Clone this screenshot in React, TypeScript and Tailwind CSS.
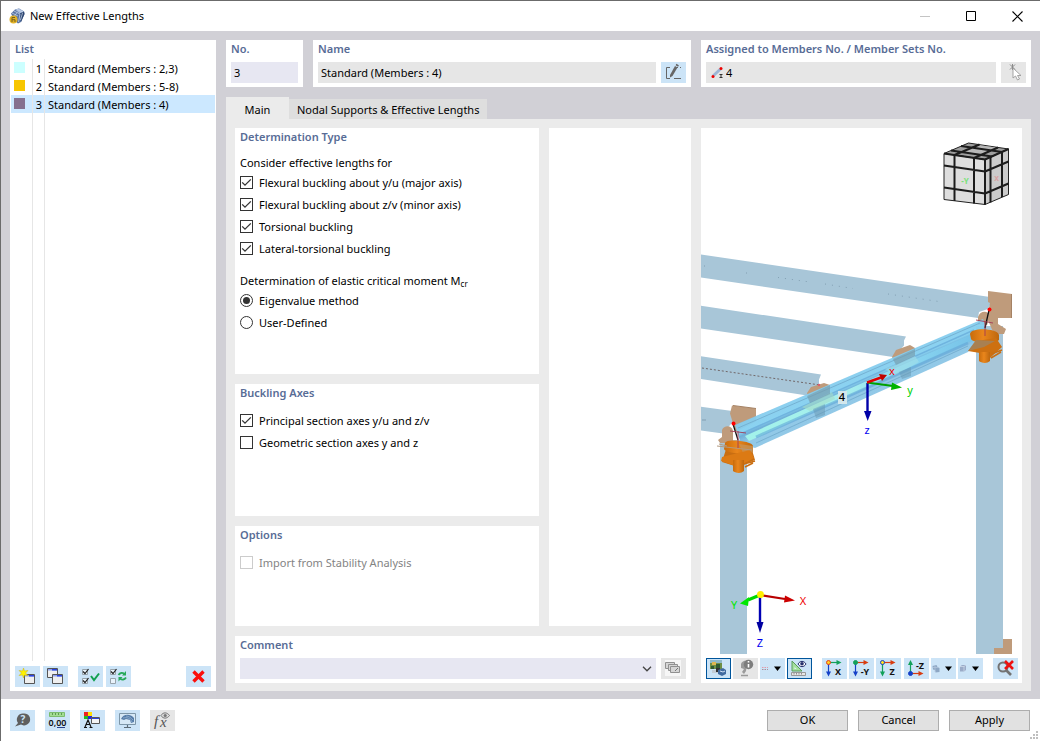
import { useState } from 'react';
import type { ReactNode } from 'react';
import { clsx } from 'clsx';

interface ListEntry {
  no: number;
  label: string;
  swatch: string;
}

const entries: ListEntry[] = [
  { no: 1, label: 'Standard (Members : 2,3)', swatch: 'bg-[#ccffff]' },
  { no: 2, label: 'Standard (Members : 5-8)', swatch: 'bg-[#f7c600]' },
  { no: 3, label: 'Standard (Members : 4)', swatch: 'bg-[#85708f]' },
];

interface IconButtonProps {
  label: string;
  children: ReactNode;
  active?: boolean;
  disabled?: boolean;
}

function IconButton({ label, children, active, disabled }: IconButtonProps) {
  return (
    <button
      type="button"
      aria-label={label}
      title={label}
      disabled={disabled}
      className={clsx(
        'flex h-[21px] w-[25px] shrink-0 items-center justify-center',
        disabled ? 'bg-[#e6e6e6]' : 'bg-[#cce4f7]',
        active && 'border border-[#00559b]',
      )}
    >
      <svg width="23" height="19" viewBox="0 0 23 19" aria-hidden="true">
        {children}
      </svg>
    </button>
  );
}

function Title({ children, htmlFor }: { children: ReactNode; htmlFor?: string }) {
  const cls = 'block h-[18px] px-[5px] text-[11px] leading-[18px] font-semibold text-[#586c96]';
  if (htmlFor) {
    return <label htmlFor={htmlFor} className={cls}>{children}</label>;
  }
  return <h2 className={cls}>{children}</h2>;
}

interface CheckProps {
  label: string;
  defaultChecked?: boolean;
  disabled?: boolean;
}

function Check({ label, defaultChecked, disabled }: CheckProps) {
  return (
    <label className={clsx('flex h-[22px] items-center gap-1.5', disabled && 'text-[#838383]')}>
      <span className="relative mb-px flex h-[13px] w-[13px]">
        <input
          type="checkbox"
          defaultChecked={defaultChecked}
          disabled={disabled}
          className="peer h-[13px] w-[13px] appearance-none border border-[#333] bg-white disabled:border-[#ccc]"
        />
        <svg
          viewBox="0 0 13 13"
          aria-hidden="true"
          className="pointer-events-none absolute inset-0 hidden h-[13px] w-[13px] peer-checked:block"
        >
          <path d="M2.2 6.4 5 9.2 10.8 3.4" fill="none" stroke="#333" strokeWidth="1.3" />
        </svg>
      </span>
      {label}
    </label>
  );
}

function Radio({ label, defaultChecked }: { label: string; defaultChecked?: boolean }) {
  return (
    <label className="flex h-[22px] items-center gap-1.5">
      <span className="relative mb-px flex h-[13px] w-[13px] items-center justify-center">
        <input
          type="radio"
          name="mcr-method"
          defaultChecked={defaultChecked}
          className="peer h-[13px] w-[13px] appearance-none rounded-full border border-[#333] bg-white"
        />
        <span className="pointer-events-none absolute hidden h-[7px] w-[7px] rounded-full bg-[#333] peer-checked:block" />
      </span>
      {label}
    </label>
  );
}

function AppIcon() {
  return (
    <svg width="16" height="16" viewBox="0 0 16 16" aria-hidden="true">
      <path d="M2 5.500 6 1.500 10 .5 15 3.500 15.500 6 12 14 9 15.500 5 12z" fill="#5873a3" />
      <path d="M6 1.500 10 .5 15 3.500 11 5.500z" fill="#a9bcdc" />
      <path d="M11 5.500 15 3.500 15.500 6 12 14z" fill="#2e4670" />
      <path d="M3 5l6 3M5 3l6 3M8 1.500l6 2.500M11 6 9.500 14M8 4.500 5.500 8M13.500 5 11.500 12" stroke="#cfdbee" strokeWidth=".7" />
      <circle cx="4.500" cy="11.500" r="4" fill="#e2b226" />
      <path d="M3 14V9.500h3M3 11.700h3v2.300" stroke="#75601e" strokeWidth="1" fill="none" />
    </svg>
  );
}

function WindowShape({ x, y }: { x: number; y: number }) {
  return (
    <g transform={`translate(${x} ${y})`}>
      <path d="M.5.5h10v9H.5z" fill="#efefef" stroke="#555" />
      <path d="M1 1h9v1.500H1z" fill="#8fa2ee" />
      <path d="M5 1h5v1.500H5z" fill="#2942e0" />
    </g>
  );
}

function TickedBoxes({ second }: { second: boolean }) {
  return (
    <>
      <path d="M3.500 2.500h5v5h-5zM3.500 11.500h5v5h-5z" fill="#e9f3fb" stroke="#98a3ab" />
      <path d="M4 4.500 6 6.500 9.500 2" fill="none" stroke="#222" strokeWidth="1.200" />
      {second && <path d="M4 13.500 6 15.500 9.500 11" fill="none" stroke="#222" strokeWidth="1.200" />}
    </>
  );
}

interface AxisIconProps {
  text: string;
  dot: string;
  ring: string;
  side: string;
  vert: string;
  up?: boolean;
}

function AxisIcon({ text, dot, ring, side, vert, up }: AxisIconProps) {
  const y = up ? 14.5 : 3.500;
  return (
    <>
      <path d={`M5.500 ${y}H14`} stroke={side} strokeWidth="1.200" />
      <path d={`M13.500 ${y - 2.5}L18.500 ${y}L13.500 ${y + 2.5}z`} fill={side} />
      <path d="M5.500 3.500V15" stroke={vert} strokeWidth="1.200" />
      <path d={up ? 'M3 6 5.500 1 8 6z' : 'M3 12.500 5.500 17.500 8 12.500z'} fill={vert} />
      <circle cx="5.500" cy={y} r="2" fill={dot} stroke={ring} />
      <text
        x="15"
        y={up ? 10 : 16}
        textAnchor="middle"
        fontSize="9"
        fontWeight="700"
        fill="#111"
      >
        {text}
      </text>
    </>
  );
}

function NavCube() {
  return (
    <g strokeLinejoin="round">
      <path d="M944 153.500 968.500 143l40 6L985 159.500z" fill="#9f9f9f" stroke="#222" />
      <path d="M944 153.500 985 159.500v45L944 199.500z" fill="#dedede" stroke="#222" />
      <path d="M985 159.500 1008.500 149v45.500L985 204.500z" fill="#cbcbcb" stroke="#222" />
      <path d="M960 151.500 978 145l18 2.500-15 6.500z" fill="#b8b8b8" />
      <path
        d="M954.500 155v46M974 158v45.500M944 165.500 985 171.500M944 187.500 985 193.500M985 171.500l23.500-10M985 193.500l23.500-10M990.500 157v45.500M1002 152v45M954.500 155l25-10.500M974 158l24-10.500M951 150.500l41 6M961 146l41 6"
        fill="none"
        stroke="#1c1c1c"
        strokeWidth="2"
      />
      <path d="M944 153.500 985 159.500V204.500M985 159.500 1008.500 149" fill="none" stroke="#1c1c1c" strokeWidth="2" />
      <text x="965" y="184" textAnchor="middle" fontSize="8" fontWeight="700" fill="#7be27b">-Y</text>
      <text x="996.500" y="181" textAnchor="middle" fontSize="7" fontWeight="700" fill="#d9a0a0">X</text>
    </g>
  );
}

function ModelView() {
  return (
    <svg
      viewBox="701 128 321 526"
      preserveAspectRatio="xMidYMid slice"
      role="img"
      aria-label="Model view"
      className="min-h-0 w-full flex-1"
    >
      <defs>
        <linearGradient id="flange" x1="845" y1="364" x2="858" y2="394" gradientUnits="userSpaceOnUse">
          <stop offset="0" stopColor="#8fc3e0" />
          <stop offset=".2" stopColor="#84b8d8" />
          <stop offset=".27" stopColor="#69a8d2" />
          <stop offset=".4" stopColor="#86cdee" />
          <stop offset=".65" stopColor="#84d0f0" />
          <stop offset=".76" stopColor="#68abd6" />
          <stop offset="1" stopColor="#8cc6e6" />
        </linearGradient>
        <linearGradient id="web" x1="740" y1="0" x2="985" y2="0" gradientUnits="userSpaceOnUse">
          <stop offset="0" stopColor="#a2f3ea" />
          <stop offset=".45" stopColor="#a6eeed" />
          <stop offset=".6" stopColor="#8fdcf4" />
          <stop offset="1" stopColor="#74bfe6" />
        </linearGradient>
        <linearGradient id="support" x1="0" y1="0" x2="1" y2="0">
          <stop offset="0" stopColor="#c86c0c" />
          <stop offset=".45" stopColor="#ea861c" />
          <stop offset="1" stopColor="#bd670e" />
        </linearGradient>
      </defs>

      {/* purlins and columns */}
      <g fill="#a8c6d8">
        <path d="M701 254.500 990 297v8l-2 4-9 3-1 6L701 277.500z" />
        <path d="M701 305.700 906 336.500l-2 4v5l-11 11.500L701 328.500z" />
        <path d="M701 356.300 821 374.500l-2 5v6l-12 10L701 379z" />
        <path d="M701 406.700 736 411.500l-3 10-10 12L701 430.500z" />
        <path d="M720 440h27v214h-27zM976 326h27v328h-27z" />
      </g>
      <path d="M702 368 820 385" stroke="#6a5c5c" strokeWidth=".9" strokeDasharray="2 2" />
      <path d="M778 277.500 810 282M825 284l28 4.500M888 294l54 8" stroke="#7895a8" strokeWidth=".8" strokeDasharray="1 6" />
      <path d="M704 266h1M746 273h1M702 420h4" stroke="#7895a8" strokeWidth=".8" />

      {/* end plates */}
      <g fill="#bf9b7b">
        <path d="M732 405.500 756 408.500v13l-20 10-3-8-3-10z" />
        <path d="M722 430c2-5 10-5 11 1v12h-13l-2-3 4-3z" />
        <path d="M988 291 1012 294v24h-14v6l8 5-2 5h-10l-7-16 3-15-2-1z" />
        <path d="M978 317c2-7 11-7 12 0l-3 8h-9z" />
        <path d="M807 393l4-6 13-4 6 2v7l-20 10z" />
        <path d="M892 357l4-7 14-5 5 3v6l-20 10z" />
        <path d="M994 648 1003 648v-9h9v15h-18z" />
      </g>
      <path d="M1011.500 294v24M733 405.500l23 3" stroke="#a58264" fill="none" />

      {/* member 4 */}
      <path d="M735 425 983 319l4 12-19 21-213 96-14-4z" fill="url(#flange)" opacity=".95" />
      <path d="M745 436 900 366 975 333l3 5L898 373 749 441z" fill="url(#web)" />
      <path d="M743 433 974 330" stroke="#70b4df" strokeWidth="1.500" />
      <path d="M738 428 980 323M756 443 968 346" stroke="#70a9cc" strokeWidth=".8" />
      <path d="M756 437 968 343" stroke="#62a8d9" strokeWidth="3" opacity=".6" />
      <path d="M802 407 832 392l3 7-25 12z" fill="#a5dcc8" opacity=".6" />
      <path d="M885 369 915 356l4 6-24 13z" fill="#a3dfe8" opacity=".6" />
      <path d="M807 396 830 385v9l-20 9z" fill="#7699a8" opacity=".6" />
      <path d="M893 359 915 349v7l-19 9z" fill="#7699a8" opacity=".6" />
      <path d="M813 409 825 404v11l-9 3zM899 372 911 367v9l-9 3z" fill="#6797b2" opacity=".5" />

      {/* supports */}
      <g>
        <path d="M722 462 727 446 752 450 755 460 738 467z" fill="#c96e12" />
        <path d="M725 443c1-5 28-2 28 3v6c-4 4-28 1-29-3z" fill="url(#support)" />
        <path d="M739 444 753 446v6l-9 3z" fill="#c99355" opacity=".8" />
        <path d="M722 457 750 450 754 458 738 467 721 461z" fill="#dc7a14" />
        <path d="M733 460h11v11c-3 3-9 2-11 0z" fill="url(#support)" />
        <path d="M744 464 755 461M745 467l8-4" stroke="#c96e12" strokeWidth="1.500" />
        <path d="M717 446l35 4M719 444l8 2" stroke="#b39a80" />
        <path d="M970 334c0-7 28-6 29 1v5c-6 5-27 3-28-1z" fill="url(#support)" />
        <path d="M968 351 977 341 996 338 1002 347 990 358 980 353z" fill="#cd7011" />
        <path d="M968 351 976 340 995 341 984 347z" fill="#a88052" />
        <path d="M979 352h11v9c-3 3-9 2-11 0z" fill="url(#support)" />
        <path d="M991 354 1002 350M991 358l10-6" stroke="#c96e12" strokeWidth="1.500" />
      </g>
      <path d="M733 424 738 440M989 310 985 328" stroke="#111" strokeWidth="1.300" />
      <path d="M730 431 746 433M738 431v17M976 320l17 3M985 322v14" stroke="#a33b55" strokeWidth=".9" />
      <circle cx="733.500" cy="423.500" r="2" fill="#f00" />
      <circle cx="989.500" cy="309.500" r="2" fill="#f00" />
      <circle cx="819" cy="385" r="1.200" fill="#dd5f6e" />

      <rect x="838" y="391" width="9" height="13" fill="#d2e7ec" />
      <text x="842" y="401" textAnchor="middle" fontSize="11" fontWeight="500" fill="#000">4</text>

      {/* member axes */}
      <path d="M867.500 383V411" stroke="#0000a8" strokeWidth="2.400" />
      <path d="M864 411h7.500L867.700 421z" fill="#0000a8" />
      <path d="M867 382.500 893 386" stroke="#00a000" strokeWidth="2" />
      <path d="M892 382.500 902 387.500 891 390z" fill="#00b400" />
      <path d="M867 382.500 881 377.500" stroke="#e00000" strokeWidth="2.400" />
      <path d="M879 374 887 375 882 381z" fill="#c00000" />
      <g fontSize="11" textAnchor="middle">
        <text x="892" y="375" fill="#f00000">x</text>
        <text x="910" y="394" fill="#00d000">y</text>
        <text x="867" y="434" fill="#0000f0">z</text>
      </g>

      {/* global axes */}
      <path d="M760 595V623" stroke="#0000b4" strokeWidth="2.400" />
      <path d="M756.500 622h7L760 633z" fill="#0000a0" />
      <path d="M760 595 785 599" stroke="#b80000" strokeWidth="2.200" />
      <path d="M785 595.500 795 600.500 784 602.500z" fill="#cc0000" />
      <path d="M760 595 748 600" stroke="#00d800" strokeWidth="3" />
      <path d="M749 597 740 603.500 748 606z" fill="#00e800" />
      <circle cx="760.500" cy="594.500" r="3.500" fill="#ffee00" />
      <g fontSize="11" textAnchor="middle">
        <text x="803" y="605" fill="#f00000">X</text>
        <text x="734" y="609" fill="#00e800">Y</text>
        <text x="760" y="647" fill="#0000f0">Z</text>
      </g>

      <NavCube />
    </svg>
  );
}

function ViewToolbar() {
  return (
    <div role="toolbar" aria-label="View" className="flex px-1 py-1 pl-[5px]">
      <div className="flex gap-[2px]">
        <IconButton label="Rendering" active>
          <path d="M3 1h12v9H3z" fill="#6f8f45" />
          <path d="M3 1h12v3H3z" fill="#8fb9c9" />
          <path d="M5 3h4v3H5z" fill="#dfb850" />
          <path d="M9 5h4v4H9zM4 7h3v3H4z" fill="#2f5b31" />
          <path d="M5 11h6v3H5z" fill="#c3cdd6" />
          <path d="M9 9h4v4H9z" fill="#333" />
          <path d="M11 11l5-2 3 2v4l-4 2-4-2z" fill="#416ba0" />
          <path d="M13 12l3 1 2-1" stroke="#d2e2f5" fill="none" />
        </IconButton>
        <IconButton label="Information" disabled>
          <path d="M7 5c1-4 8-5 9-1l-3 1-1 7-2 3-2-2 2-3-3-1z" fill="#9a9a9a" />
          <circle cx="14.500" cy="5.500" r="4.700" fill="#7d7d7d" />
          <path d="M14.500 5v3.500M14.500 2v1.500" stroke="#fff" strokeWidth="1.600" />
          <path d="M7 16.500h7" stroke="#999" strokeWidth="1.500" />
        </IconButton>
        <IconButton label="Line style">
          <path d="M1 8.500h6" stroke="#e29aa8" strokeDasharray="1.500 1" />
          <path d="M1 10.500h6" stroke="#a88f9c" strokeDasharray="1.500 1" />
          <path d="M13 7.500h7L16.500 12z" fill="#000" />
        </IconButton>
        <IconButton label="Dimensions" active>
          <path d="M4 2v10h10z" fill="#a5e09e" stroke="#5a9c5c" />
          <path d="M6.500 8v2h2z" fill="#e4f2fd" />
          <path d="M3.500 13.500h14v3h-14z" fill="#e6e6e6" stroke="#999" />
          <path d="M6 14v1.500M8.500 14v1.500M11 14v1.500M13.500 14v1.500" stroke="#777" strokeWidth=".8" />
          <path d="M10 5c2-3.500 6-3.500 8 0-2 3.500-6 3.500-8 0z" fill="#fff" stroke="#25306b" />
          <circle cx="14" cy="4.800" r="1.800" fill="#25306b" />
        </IconButton>
      </div>
      <div className="mx-[10px] flex flex-1 justify-between">
        <IconButton label="View in X direction">
          <AxisIcon text="X" dot="#ffd21f" ring="#e8401c" side="#12a05a" vert="#1440c8" />
        </IconButton>
        <IconButton label="View against Y direction">
          <AxisIcon text="-Y" dot="#12a05a" ring="#12a05a" side="#d83c10" vert="#1440c8" />
        </IconButton>
        <IconButton label="View in Z direction">
          <AxisIcon text="Z" dot="#ffe21f" ring="#1440c8" side="#d83c10" vert="#12a05a" />
        </IconButton>
        <IconButton label="View against Z direction">
          <AxisIcon text="-Z" dot="#1440c8" ring="#1440c8" side="#d83c10" vert="#12a05a" up />
        </IconButton>
        <IconButton label="Display mode">
          <path d="M.5 7 4.500 6l1 2 2 1v4l-4 .5L3 11 1 10.500z" fill="#8ea7c4" />
          <path d="M1 8.500h6M3 7v6" stroke="#b6c8de" strokeWidth=".7" />
          <path d="M13 7.500h7L16.500 12z" fill="#000" />
        </IconButton>
        <IconButton label="Projection">
          <path d="M1 7.500 3 6h4v5l-2 1.500H1z" fill="#9aabc8" />
          <path d="M1 7.500h4v5M5 7.500 7 6" stroke="#d5dfee" strokeWidth=".7" fill="none" />
          <path d="M13 7.500h7L16.500 12z" fill="#000" />
        </IconButton>
      </div>
      <IconButton label="Reset zoom">
        <circle cx="9" cy="8" r="4.500" fill="none" stroke="#737373" strokeWidth="2" />
        <path d="M12 11l5 5" stroke="#737373" strokeWidth="2.600" />
        <path d="M11 2l8 8M19 2l-8 8" stroke="#ee1111" strokeWidth="2.600" />
      </IconButton>
    </div>
  );
}

function ListPanel() {
  const [selected, setSelected] = useState(3);

  return (
    <section className="flex w-[206px] shrink-0 flex-col bg-white">
      <Title>List</Title>
      <div className="mx-px mt-px flex-1">
        <ul className="relative h-full">
          {entries.map((entry) => (
            <li key={entry.no}>
              <button
                type="button"
                aria-pressed={entry.no === selected}
                onClick={() => setSelected(entry.no)}
                className={clsx(
                  'flex h-[18px] w-full items-center pt-0.5 text-left',
                  entry.no === selected && 'bg-[#cce8ff]',
                )}
              >
                <span className={clsx('mb-1 ml-[3px] h-[11px] w-[11px]', entry.swatch)} />
                <span className="w-[17px] text-right">{entry.no}</span>
                <span className="ml-1.5">{entry.label}</span>
              </button>
            </li>
          ))}
          <li aria-hidden="true" className="pointer-events-none absolute inset-y-0 left-[21px] w-[13px] border-x border-[#e6e6e6]" />
        </ul>
      </div>
      <div className="flex gap-[3px] px-[5px] pt-[5px] pb-1">
        <IconButton label="New">
          <WindowShape x={8} y={7} />
          <path d="M7.500 1 8.500 4 12 3.500 9.500 6 12 8.500 8.500 8 7.500 11 6.500 8 3 8.500 5.500 6 3 3.500 6.500 4z" fill="#fff200" stroke="#c9b21a" strokeWidth=".5" />
        </IconButton>
        <IconButton label="Copy">
          <WindowShape x={3} y={1} />
          <WindowShape x={8} y={7} />
        </IconButton>
        <span className="w-1" />
        <IconButton label="Select all">
          <TickedBoxes second />
          <path d="M12 9l3 4 5-6.500" fill="none" stroke="#11a050" strokeWidth="2" />
        </IconButton>
        <IconButton label="Invert selection">
          <TickedBoxes second={false} />
          <path d="M11.500 8c1.500-2.500 4-2.500 6-1M19 10.500c-1.500 2.500-4 2.500-6 1" fill="none" stroke="#27a85a" strokeWidth="1.800" />
          <path d="M19 4v4.500h-4zM11.500 14.500V10h4z" fill="#27a85a" />
        </IconButton>
        <span className="flex-1" />
        <IconButton label="Delete">
          <path d="M6.500 4.500 16.500 14.500M16.500 4.500 6.500 14.500" stroke="#fb0f0c" strokeWidth="3.400" />
        </IconButton>
      </div>
    </section>
  );
}

const fieldClass = 'h-[21px] min-w-0 px-[3px] outline-none';

function HeaderFields() {
  return (
    <div className="grid grid-cols-[77px_1fr_330px] gap-[10px]">
      <section className="bg-white pb-1">
        <Title htmlFor="no">No.</Title>
        <div className="mt-1 flex px-[5px]">
          <input id="no" defaultValue="3" className={clsx(fieldClass, 'w-full bg-[#e7e7f2]')} />
        </div>
      </section>
      <section className="bg-white pb-1">
        <Title htmlFor="name">Name</Title>
        <div className="mt-1 flex gap-[5px] px-[5px]">
          <input
            id="name"
            readOnly
            value="Standard (Members : 4)"
            className={clsx(fieldClass, 'flex-1 bg-[#e6e6e6]')}
          />
          <IconButton label="Edit name">
            <path d="M8 4.500H4.500v11H8M12 15.500h7M15 4.500h1M18 4.500h1" fill="none" stroke="#666" />
            <path d="M8 12 13 3l2.500 1.500L10.500 13 8 14.500z" fill="#666" />
            <path d="M14 1.500 16.500 3" stroke="#666" strokeWidth="1.500" />
          </IconButton>
        </div>
      </section>
      <section className="bg-white pb-1">
        <Title htmlFor="assigned">Assigned to Members No. / Member Sets No.</Title>
        <div className="mt-1 flex gap-[5px] px-[5px]">
          <div className="flex flex-1 items-center bg-[#e6e6e6] pl-[5px]">
            <svg width="12" height="14" viewBox="0 0 12 14" aria-hidden="true">
              <path d="M2 10 9.500 3" stroke="#9db6d6" strokeWidth="3" />
              <circle cx="2" cy="10.500" r="1.500" fill="#e00" />
              <circle cx="10" cy="2.500" r="1.500" fill="#e00" />
              <path d="M8.500 8.500h3M8.500 11.500h3M10 8.500v3" stroke="#333" />
            </svg>
            <input id="assigned" readOnly value="4" className={clsx(fieldClass, 'flex-1 bg-transparent')} />
          </div>
          <IconButton label="Select in model" disabled>
            <path d="M8 1.500l5 5M13 1.500l-5 5M10.500 1v6" stroke="#8a8a8a" />
            <path d="M11 5v10l2.500-2 2 4 2-1-2-3.500h3.500z" fill="#fff" stroke="#9b9b9b" strokeWidth=".9" />
          </IconButton>
        </div>
      </section>
    </div>
  );
}

function MainTab() {
  return (
    <div className="grid min-h-0 flex-1 grid-cols-[1fr_321px] gap-[10px] bg-[#ebebeb] px-[9px] pt-[9px] pb-2">
      <div className="flex flex-col gap-[10px]">
        <div className="grid flex-1 grid-cols-[304px_1fr] gap-[10px]">
          <div className="grid grid-rows-[246fr_132fr_100fr] gap-[10px]">
            <section className="bg-white">
              <Title>Determination Type</Title>
              <fieldset className="mt-2 px-[5px]">
                <legend className="h-[18px] leading-[18px]">Consider effective lengths for</legend>
                <Check label="Flexural buckling about y/u (major axis)" defaultChecked />
                <Check label="Flexural buckling about z/v (minor axis)" defaultChecked />
                <Check label="Torsional buckling" defaultChecked />
                <Check label="Lateral-torsional buckling" defaultChecked />
              </fieldset>
              <fieldset className="mt-3 px-[5px]">
                <legend className="h-[18px] leading-[18px]">
                  Determination of elastic critical moment M<sub className="-bottom-0.5 text-[8px]">cr</sub>
                </legend>
                <Radio label="Eigenvalue method" defaultChecked />
                <Radio label="User-Defined" />
              </fieldset>
            </section>
            <section className="bg-white">
              <Title>Buckling Axes</Title>
              <div className="mt-2 px-[5px]">
                <Check label="Principal section axes y/u and z/v" defaultChecked />
                <Check label="Geometric section axes y and z" />
              </div>
            </section>
            <section className="bg-white">
              <Title>Options</Title>
              <div className="mt-2 px-[5px]">
                <Check label="Import from Stability Analysis" disabled />
              </div>
            </section>
          </div>
          <div className="bg-white" />
        </div>
        <section className="bg-white pb-1">
          <Title htmlFor="comment">Comment</Title>
          <div className="mt-1 flex gap-[5px] px-[5px]">
            <div className="relative flex flex-1">
              <select id="comment" className="h-[21px] w-full appearance-none bg-[#e7e7f2] px-[3px] outline-none">
                <option value="" />
              </select>
              <svg width="10" height="6" viewBox="0 0 10 6" aria-hidden="true" className="pointer-events-none absolute top-2 right-1">
                <path d="M1 .8 5 4.800 9 .8" fill="none" stroke="#444" strokeWidth="1.300" />
              </svg>
            </div>
            <IconButton label="Comment library" disabled>
              <path d="M3 1h16v16H3z" fill="#f6f6f6" />
              <g fill="#d5d5d5" stroke="#909090">
                <path d="M3.500 3.500h9v6h-9z" />
                <path d="M6.500 5.500h9v6h-9z" />
                <path d="M8.500 7.500h9v6h-9z" />
              </g>
              <path d="M13 12l3-3" stroke="#777" />
            </IconButton>
          </div>
        </section>
      </div>
      <div className="flex min-h-0 flex-col bg-white">
        <ModelView />
        <ViewToolbar />
      </div>
    </div>
  );
}

function Footer() {
  return (
    <footer className="flex h-[42px] shrink-0 items-center gap-[10px] bg-white pr-[10px] pl-[9px]">
      <IconButton label="Help">
        <path d="M12 2.500a6 6 0 1 1-2 11L4 15.500 7 12A6 6 0 0 1 12 2.500z" fill="#5f5f5f" />
        <text x="12" y="12" textAnchor="middle" fontSize="10" fontWeight="700" fill="#cce4f7">?</text>
      </IconButton>
      <IconButton label="Units and decimal places">
        <path d="M3.500 1.500h15v4h-15z" fill="#a3dc93" stroke="#7bbd6d" />
        <path d="M6.500 2v2M9.500 2v2M12.500 2v2M15.500 2v2" stroke="#5d9c52" />
        <text x="11.500" y="15" textAnchor="middle" fontSize="9" fontWeight="600" fill="#111">0,00</text>
        <path d="M11 16.500h8" stroke="#27408b" />
      </IconButton>
      <IconButton label="Display properties">
        <path d="M3 1h4v4H3z" fill="#e22" />
        <path d="M7 1h4v4H7z" fill="#fd0" />
        <path d="M3 5h4v3H3z" fill="#2b2" />
        <path d="M7 5h4v3H7z" fill="#22d" />
        <path d="M4 16 7 9 10 16M5 13.500h4M3 16.500h3M8.500 16.500h3" stroke="#111" strokeWidth="1.200" fill="none" />
        <path d="M10.500 6.500h8v6h-8z" fill="#f3f3f3" stroke="#555" />
        <path d="M11 7h7v1h-7z" fill="#2942e0" />
      </IconButton>
      <IconButton label="View settings">
        <path d="M3.500 2.500h16v11h-16z" fill="#d6e8f5" stroke="#7d96a8" />
        <path d="M5 8c2-5 9-6 13-1v4l-3 1-1-3-4-1-2 1z" fill="#557ca8" />
        <path d="M7 7c4-1 7 0 9 4M10 5c3 0 5 2 7 4" stroke="#9ebbd9" strokeWidth=".7" fill="none" />
        <path d="M11.500 14v2M8 16.500h7" stroke="#5c6b76" strokeWidth="1.200" />
      </IconButton>
      <IconButton label="Formula" disabled>
        <text x="3" y="15" fontSize="15" fontStyle="italic" fill="#555" className="font-['Liberation_Serif',serif]">f</text>
        <text x="9" y="16" fontSize="15" fontStyle="italic" fill="#555" className="font-['Liberation_Serif',serif]">x</text>
        <path d="M10 4.500c2-3.500 6-3.500 8.500 0-2.500 3.500-6.500 3.500-8.500 0z" fill="#ddd" stroke="#777" />
        <circle cx="14.200" cy="4.500" r="1.600" fill="#777" />
      </IconButton>
      <div className="relative ml-auto flex gap-[10px]">
        {['OK', 'Cancel', 'Apply'].map((label) => (
          <button
            key={label}
            type="button"
            className="h-[21px] w-[81px] border border-[#adadad] bg-[#e1e1e1] text-center leading-[18px]"
          >
            {label}
          </button>
        ))}
        <svg width="8" height="8" viewBox="0 0 8 8" aria-hidden="true" className="absolute -right-2 -bottom-2">
          <path d="M6 0h2v2H6zM3 3h2v2H3zM6 3h2v2H6zM0 6h2v2H0zM3 6h2v2H3zM6 6h2v2H6z" fill="#bfbfbf" />
        </svg>
      </div>
    </footer>
  );
}

export default function App() {
  const [tab, setTab] = useState('Main');

  return (
    <div className="flex h-screen min-h-[660px] flex-col border-t border-l border-[#6b6b6b] bg-[#d1d0d6] font-['Noto_Sans',sans-serif] text-[11px] leading-4 text-black">
      <header className="flex h-[30px] shrink-0 items-center bg-white pl-2">
        <AppIcon />
        <h1 className="ml-[5px] flex-1">New Effective Lengths</h1>
        <button type="button" aria-label="Minimize" disabled className="flex h-full w-[46px] items-center justify-center">
          <svg width="11" height="11" viewBox="0 0 11 11"><path d="M0 5.500h10" stroke="#c4c4c4" /></svg>
        </button>
        <button type="button" aria-label="Maximize" className="flex h-full w-[46px] items-center justify-center">
          <svg width="11" height="11" viewBox="0 0 11 11"><path d="M.5.5h9v9h-9z" fill="none" stroke="#000" /></svg>
        </button>
        <button type="button" aria-label="Close" className="flex h-full w-[46px] items-center justify-center">
          <svg width="11" height="11" viewBox="0 0 11 11"><path d="M.5.5l10 10M10.500.5l-10 10" stroke="#000" strokeWidth="1.100" /></svg>
        </button>
      </header>

      <div className="flex min-h-0 flex-1 gap-[10px] px-[9px] pt-[9px] pb-2">
        <ListPanel />
        <main className="flex min-w-0 flex-1 flex-col">
          <HeaderFields />
          <div role="tablist" className="mt-[10px] flex h-[22px] items-end">
            {['Main', 'Nodal Supports & Effective Lengths'].map((name) => (
              <button
                key={name}
                type="button"
                role="tab"
                aria-selected={name === tab}
                onClick={() => setTab(name)}
                className={clsx(
                  name === tab ? 'h-[22px] min-w-[63px] bg-[#ebebeb] px-[18px] pt-1' : 'h-5 bg-[#dedede] px-2 pt-0.5',
                )}
              >
                {name}
              </button>
            ))}
          </div>
          <MainTab />
        </main>
      </div>

      <Footer />
    </div>
  );
}
